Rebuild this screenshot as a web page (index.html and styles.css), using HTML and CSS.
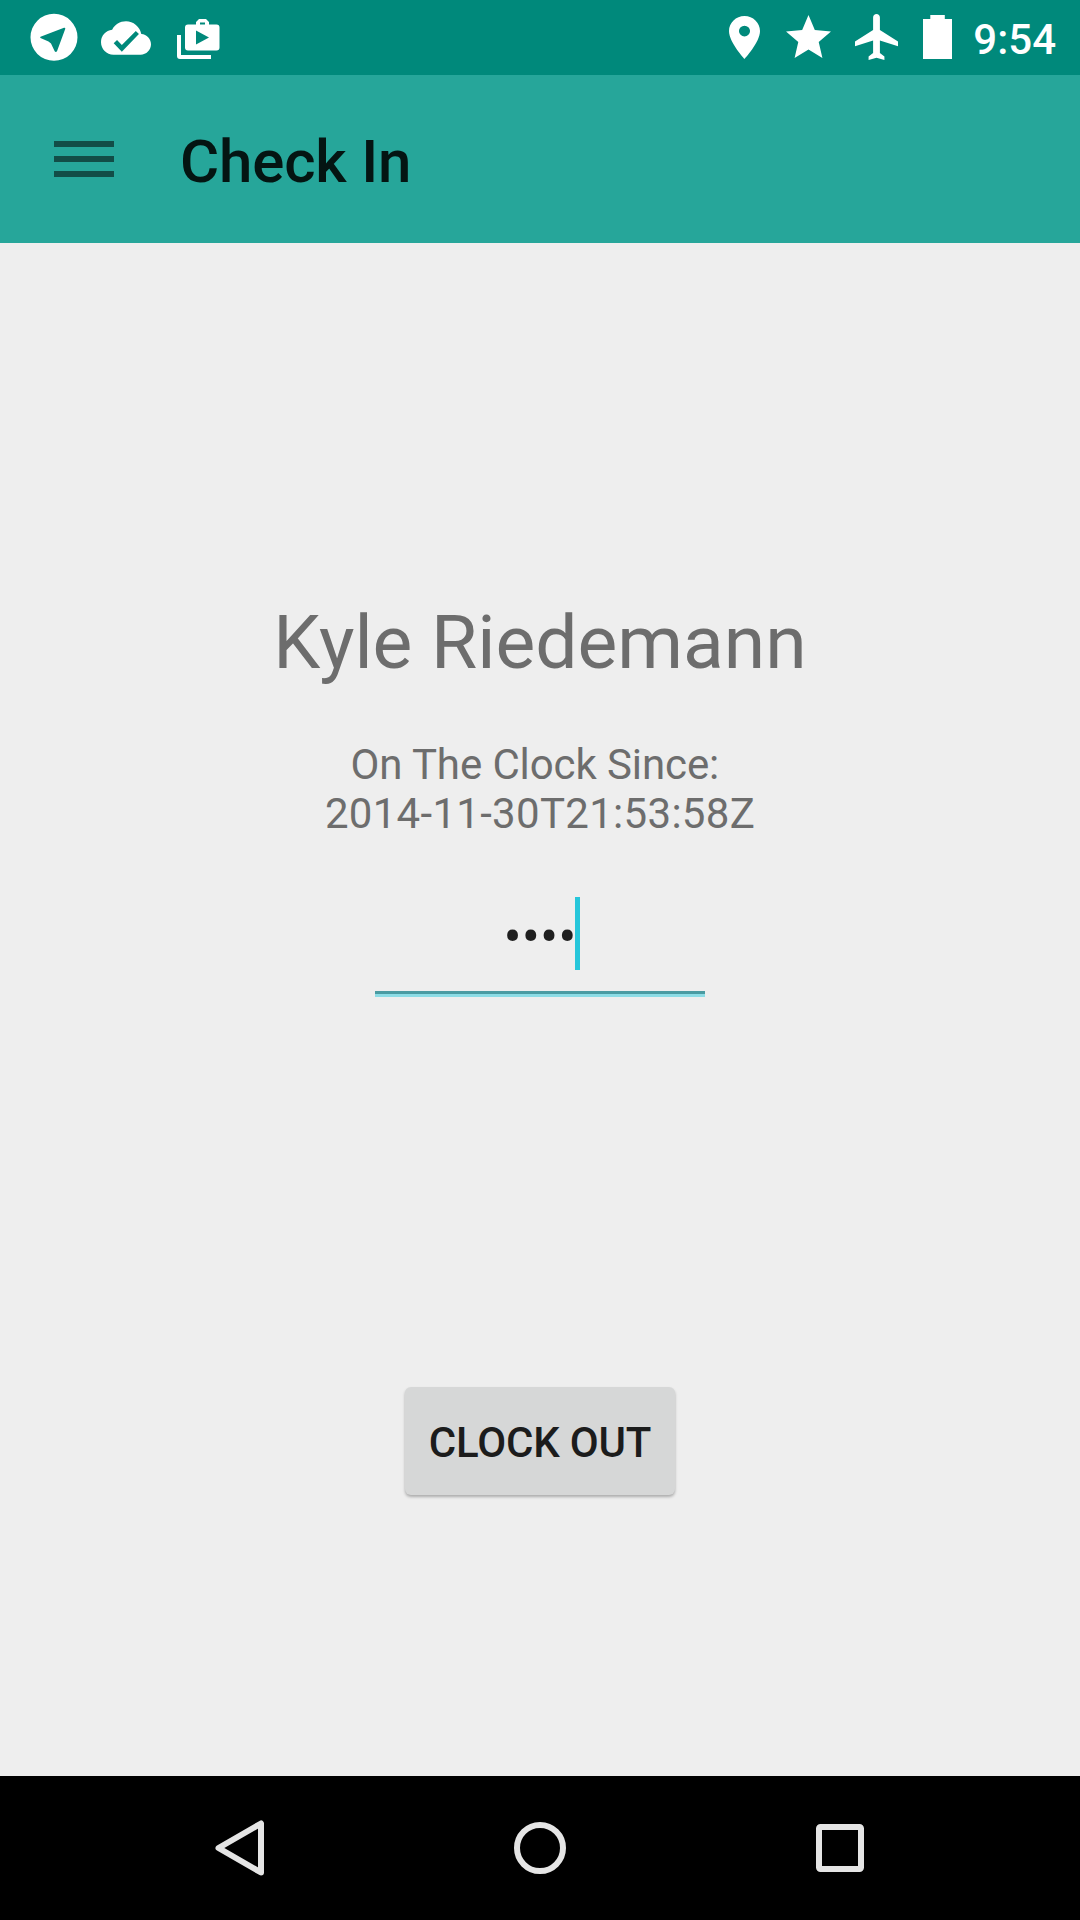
FILE: index.html
```html
<!DOCTYPE html>
<html lang="en">
<head>
<meta charset="utf-8">
<title>Check In</title>
<link rel="stylesheet" href="styles.css">
</head>
<body>
<div class="screen">
  <header class="status-bar">
    <div class="notifications">
      <svg width="48" height="48" viewBox="0 0 48 48" fill="#fff"><path fill-rule="evenodd" d="M24 .8a23.5 23.5 0 1 0 0 47A23.500 23.500 0 0 0 24 .8zM10.500 23.700L34 14.800Q35.700 14.500 35.200 16L27 38.300Q25.800 39.800 24.700 38.300L21 30.500 18.500 28.500 10.500 25Q9.800 24.300 10.500 23.700z"/></svg>
      <svg width="50" height="50" viewBox="0 0 24 24" fill="#fff"><path d="M19.350 10.040A7.490 7.490 0 0 0 12 4C9.110 4 6.600 5.640 5.350 8.040A5.994 5.994 0 0 0 0 14c0 3.310 2.690 6 6 6h13c2.760 0 5-2.240 5-5 0-2.640-2.050-4.780-4.650-4.960zM10 18.600l-3.900-4.100 1.600-1.600L10 15.300 16.700 8.600l1.500 1.500L10 18.600z"/></svg>
      <svg class="briefcase" width="44" height="42" viewBox="0 0 44 42" fill="#fff"><path fill-rule="evenodd" d="M0 17h4v20h30v4H3Q0 41 0 38zM8 9.500Q8 6.500 11 6.500h8V4l3-3h7l3 3v2.500h7.500Q42.500 6.500 42.500 9.500v20Q42.500 32.500 39.500 32.500H11Q8 32.500 8 29.500zM23 4.500v2h5v-2zM19 12.500v14l13-7z"/></svg>
    </div>
    <div class="system">
      <svg class="pin" width="31" height="43" viewBox="5 2 14 20" preserveAspectRatio="none" fill="#fff"><path d="M12 2C8.130 2 5 5.130 5 9c0 5.250 7 13 7 13s7-7.750 7-13c0-3.870-3.130-7-7-7zm0 9.500a2.500 2.500 0 1 1 0-5 2.500 2.500 0 0 1 0 5z"/></svg>
      <svg class="star" width="45" height="43" viewBox="2 2 20 19" preserveAspectRatio="none" fill="#fff"><path d="M12 17.270 18.180 21l-1.640-7.030L22 9.240l-7.190-.610L12 2 9.190 8.630 2 9.240l5.460 4.730L5.820 21z"/></svg>
      <svg class="plane" width="43" height="46" viewBox="2 2 19 20" preserveAspectRatio="none" fill="#fff"><path d="M21 16v-2l-8-5V3.500c0-.830-.670-1.500-1.500-1.500S10 2.670 10 3.500V9l-8 5v2l8-2.500V19l-2 1.500V22l3.500-1 3.500 1v-1.500L13 19v-5.500z"/></svg>
      <svg class="battery" width="29" height="44" viewBox="0 0 29 44" fill="#fff"><path d="M7.300 0h14.500v4H29v40H0V4h7.300z"/></svg>
      <span class="time">9:54</span>
    </div>
  </header>
  <div class="toolbar">
    <div class="menu"><i></i><i></i><i></i></div>
    <h1 class="title">Check In</h1>
  </div>
  <main class="content">
    <div class="name">Kyle Riedemann</div>
    <div class="since">On The Clock Since:&nbsp;<br><span class="timestamp">2014-11-30T21:53:58Z</span></div>
    <div class="pin-field"><span class="dots">••••</span><span class="caret"></span></div>
    <button class="clock-out">CLOCK OUT</button>
  </main>
  <nav class="nav-bar">
    <svg class="back" width="60" height="60" viewBox="0 0 60 60"><path d="M51 5.500v49L8.500 30z"/></svg>
    <svg class="home" width="60" height="60" viewBox="0 0 60 60"><circle cx="30" cy="30" r="23"/></svg>
    <svg class="recent" width="60" height="60" viewBox="0 0 60 60"><rect x="9" y="9" width="42" height="42" rx="1.500"/></svg>
  </nav>
</div>
</body>
</html>
```
FILE: styles.css
```css
* { box-sizing: border-box; }
body { margin: 0; font-family: Roboto, "Liberation Sans", sans-serif; }
svg { display: block; flex: none; }

.screen { width: 1080px; height: 1920px; display: flex; flex-direction: column; background: #eee; }

.status-bar { height: 75px; flex: none; display: flex; justify-content: space-between; background: #00897b; padding: 0 24px 0 30px; }
.notifications, .system { display: flex; align-items: flex-start; }
.notifications { padding-top: 13px; }
.notifications svg:nth-child(2) { margin-left: 23px; }
.briefcase { margin: 5px 0 0 26px; }
.system { padding-top: 14px; }
.pin { margin-top: 2px; }
.star { margin: 1px 0 0 26px; }
.plane { margin-left: 24px; }
.battery { margin: 1px 0 0 25px; }
.time { margin: 1px 0 0 21px; font-size: 42px; line-height: 49px; font-weight: 500; color: #fff; }

.toolbar { height: 168px; flex: none; display: flex; align-items: center; background: #26a69a; padding-left: 54px; }
.menu { width: 60px; display: flex; flex-direction: column; gap: 9px; }
.menu i { height: 6px; background: #124d47; }
.title { margin: 6px 0 0 66px; font-size: 60px; line-height: 70px; font-weight: 500; letter-spacing: -.15px; color: #041512; }

.content { flex: 1; display: flex; flex-direction: column; align-items: center; color: #6d6d6d; padding-top: 355px; }
.name { font-size: 75px; line-height: 88px; }
.since { margin-top: 54px; font-size: 42px; line-height: 49px; text-align: center; letter-spacing: -.1px; }
.timestamp { letter-spacing: .3px; }
.pin-field { width: 330px; height: 100px; margin-top: 59px; display: flex; justify-content: center; border-bottom: 3px solid #8cdce5; box-shadow: inset 0 -3px #4a9ba2; }
.dots { padding-top: 3px; font-size: 54px; line-height: 73px; color: #1f1f1f; }
.caret { width: 5px; height: 73px; margin: 0 -4px 0 -1px; background: #26c6da; }
.clock-out { width: 270px; height: 108px; margin-top: 390px; padding: 2px 0 0; border: 0; border-radius: 6px; background: #d6d7d7; box-shadow: 0 2px 3px rgba(0, 0, 0, .28); font: 500 42px/49px Roboto, "Liberation Sans", sans-serif; letter-spacing: -.2px; color: #1c1c1c; }

.nav-bar { height: 144px; flex: none; display: flex; align-items: center; justify-content: space-between; padding: 0 210px; background: #000; }
.nav-bar svg { fill: none; stroke: #e5e5e5; stroke-width: 6; stroke-linejoin: round; }
```
